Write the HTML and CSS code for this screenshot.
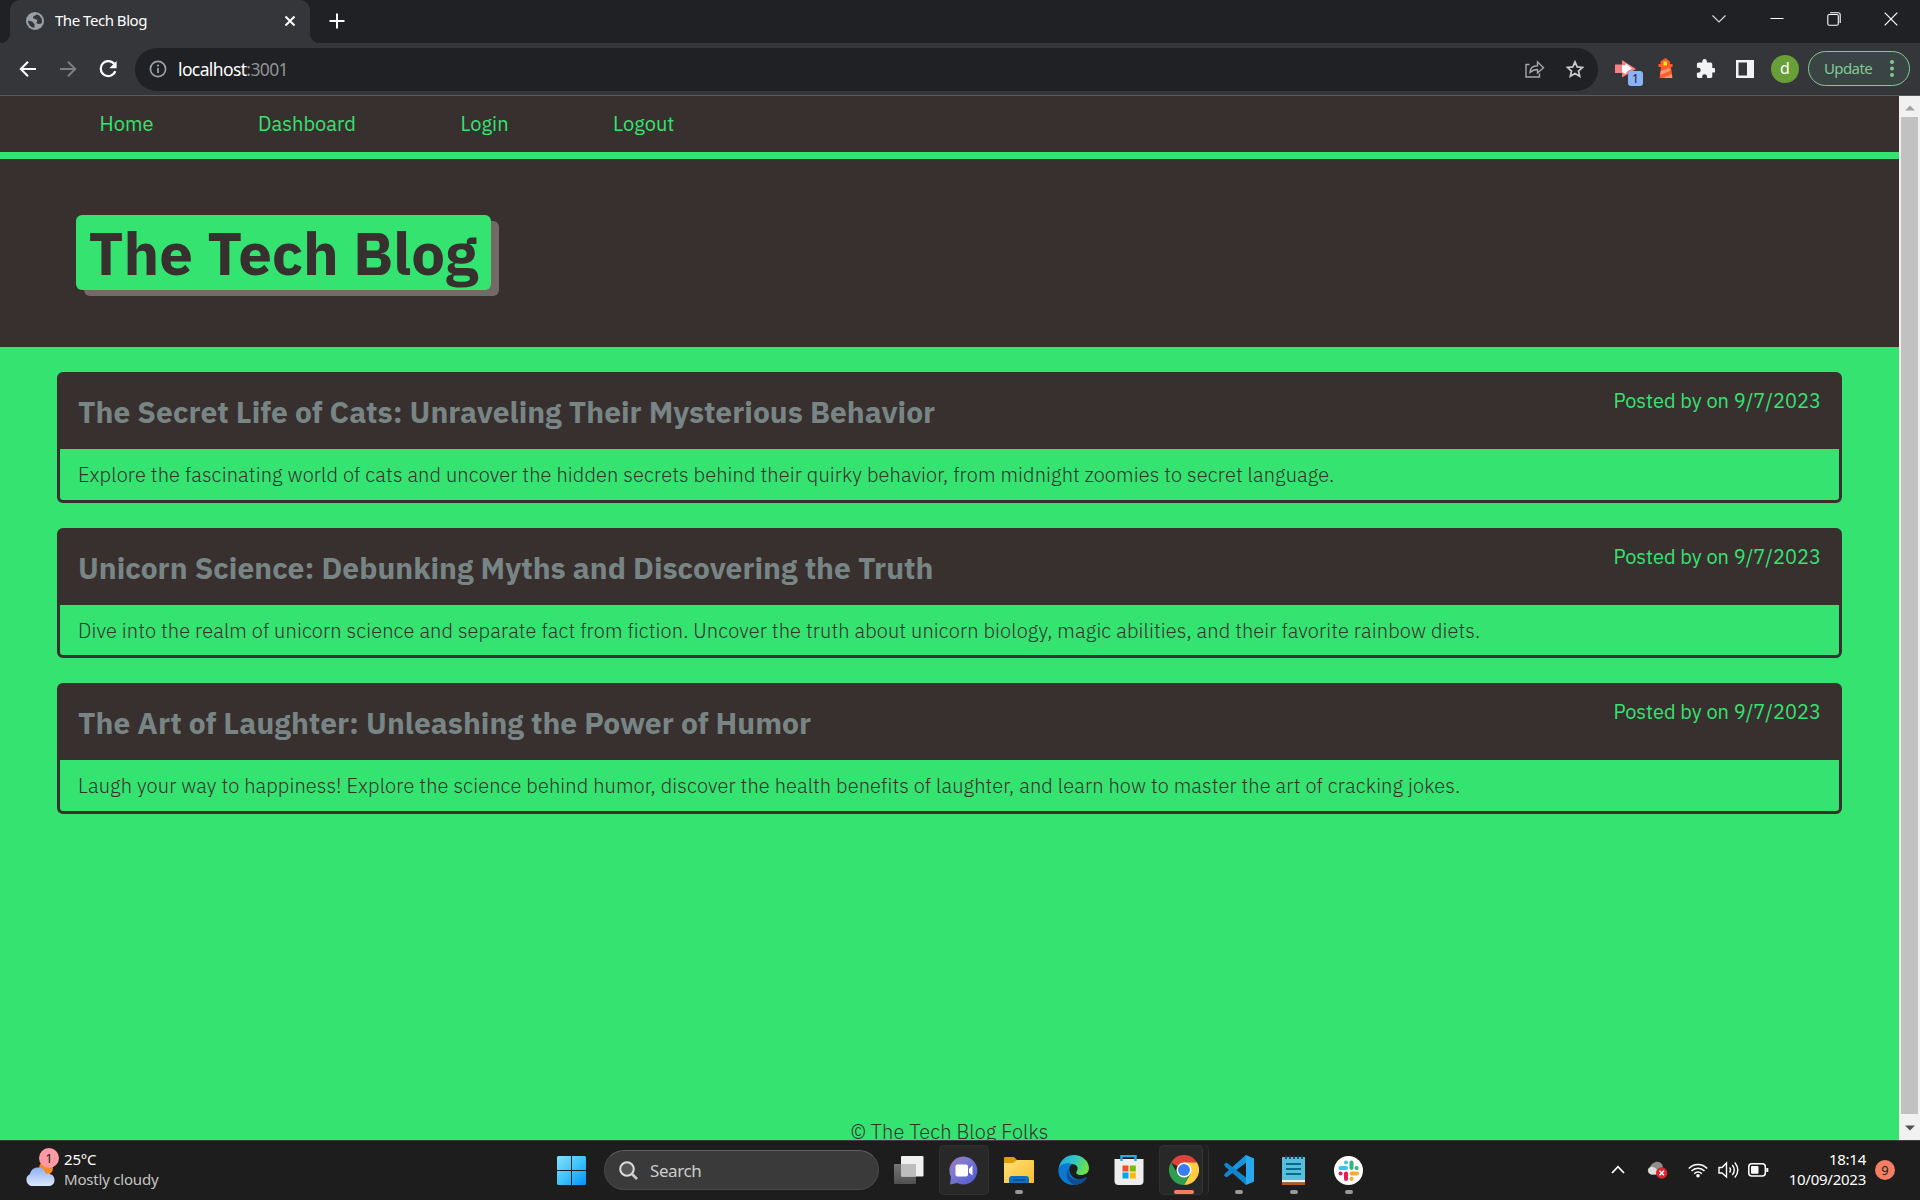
FILE: index.html
```html
<!DOCTYPE html>
<html lang="en">
<head>
<meta charset="utf-8">
<title>The Tech Blog</title>
<link rel="stylesheet" href="styles.css">
</head>
<body>
<div class="screen">
  <div class="tabstrip">
    <div class="tab">
      <svg class="globe" width="18" height="18" viewBox="0 0 18 18"><circle cx="9" cy="9" r="9" fill="#9aa0a6"/><path d="M2 8.500 6 9.500 8.500 12V15.800A7 7 0 0 1 2 8.500zM10.500 2.200C10 4 7 3.500 7 5.500 7 7.500 10 6.500 11 8 12 9.500 9.500 10 11 11.500 12.500 12.500 14 11.500 15.500 11.500A7 7 0 0 0 10.500 2.200z" fill="#35363a"/></svg>
      <span class="tab-title">The Tech Blog</span>
      <svg width="12" height="12" viewBox="0 0 12 12"><path d="M1.500 1.500l9 9M10.500 1.500l-9 9" stroke="#fff" stroke-width="2"/></svg>
    </div>
    <svg class="newtab" width="16" height="16" viewBox="0 0 16 16"><path d="M8 .5v15M.5 8h15" stroke="#fff" stroke-width="2"/></svg>
    <div class="window-buttons">
      <svg width="16" height="14" viewBox="0 0 16 14"><path d="M1.500 3.500 8 10l6.500-6.500" fill="none" stroke="#ddd" stroke-width="1.100"/></svg>
      <svg width="14" height="14" viewBox="0 0 14 14"><path d="M.5 6.500h13" stroke="#fff"/></svg>
      <svg width="14" height="14" viewBox="0 0 14 14"><rect x=".8" y="2.500" width="10.500" height="10.700" rx="1.500" fill="none" stroke="#fff" stroke-width="1.100"/><path d="M3 .7h8.200a2 2 0 0 1 2 2V11" fill="none" stroke="#fff" stroke-width="1.100"/></svg>
      <svg width="14" height="14" viewBox="0 0 14 14"><path d="M.7.7l12.600 12.600M13.300.7.7 13.300" stroke="#fff" stroke-width="1.200"/></svg>
    </div>
  </div>
  <div class="toolbar">
    <div class="nav-buttons">
      <svg width="18" height="18" viewBox="0 0 18 18"><path d="M17 9H2M9 1.800 1.800 9 9 16.200" fill="none" stroke="#fff" stroke-width="2"/></svg>
      <svg width="18" height="18" viewBox="0 0 18 18"><path d="M1 9h15M9 1.800 16.200 9 9 16.200" fill="none" stroke="#7c7e82" stroke-width="2"/></svg>
      <svg width="18" height="18" viewBox="0 0 18 18"><path d="M15.600 4.500A7.500 7.500 0 1 0 16.300 11.200" fill="none" stroke="#fff" stroke-width="2.200"/><path d="M17.600 1v7.200h-7.200z" fill="#fff"/></svg>
    </div>
    <div class="omnibox">
      <svg width="18" height="18" viewBox="0 0 18 18"><circle cx="9" cy="9" r="7.600" fill="none" stroke="#9aa0a6" stroke-width="1.700"/><path d="M9 8v5" stroke="#9aa0a6" stroke-width="1.800"/><circle cx="9" cy="5.600" r="1.100" fill="#9aa0a6"/></svg>
      <span class="address">localhost<span class="port">:3001</span></span>
      <svg width="20" height="18" viewBox="0 0 20 18"><path d="M4.500 4.500H1V17h13.500v-3.500M5 12.500C5 8 8 5.700 12.500 5.700V1.800L18.500 7.700 12.500 13V9.500C9 9.500 7 10.500 5 12.500z" fill="none" stroke="#a5a8ab" stroke-width="1.400"/></svg>
      <svg class="star" width="18" height="18" viewBox="0 0 18 18"><path d="M9 1.800l2.200 5.100 5.400.5-4.100 3.600 1.200 5.300L9 13.500l-4.700 2.800 1.200-5.300L1.400 7.400l5.400-.5z" fill="none" stroke="#c9cbcd" stroke-width="1.700"/></svg>
    </div>
    <div class="extensions">
      <div class="ext">
        <svg width="22" height="18" viewBox="0 0 22 18"><path d="M0 4.500h7V0l14 9L7 17.500V13H0z" fill="#f98080"/><path d="M7 5l3 .5 1-2 6 5-5 3-1.500 2.500L7 12z" fill="#fff"/></svg>
        <span class="ext-badge">1</span>
      </div>
      <svg class="lighthouse" width="16" height="21" viewBox="0 0 16 21"><path d="M7.500 0 12 3.500V6h2.500v3H13l1.500 11h-13L3 9H.5V6h2V3.500z" fill="#ff5c2b"/><rect x="5.500" y="3.500" width="3.500" height="4" fill="#ffe500"/><path d="M3 13l8.500-3 .5 3-9.700 4z" fill="#ff9a78"/><path d="M5 20l8.500-4 .7 4z" fill="#ff9a78"/></svg>
      <svg class="puzzle" width="19" height="19" viewBox="1 1 21 21"><path d="M20.500 11H19V7c0-1.100-.9-2-2-2h-4V3.500a2.500 2.500 0 0 0-5 0V5H4c-1.100 0-2 .9-2 2v3.800h1.500a2.700 2.700 0 0 1 0 5.400H2V20c0 1.100.9 2 2 2h3.800v-1.500a2.700 2.700 0 0 1 5.400 0V22H17c1.100 0 2-.9 2-2v-4h1.500a2.500 2.500 0 0 0 0-5z" fill="#f1f3f4"/></svg>
      <svg class="panel" width="18" height="18" viewBox="0 0 18 18"><path d="M0 0h18v18H0zM2.500 2.500v13H11v-13z" fill="#f1f3f4" fill-rule="evenodd"/></svg>
      <span class="avatar">d</span>
      <div class="update"><span>Update</span><svg width="4" height="17" viewBox="0 0 4 17"><g fill="#81c995"><circle cx="2" cy="2" r="2"/><circle cx="2" cy="8.500" r="2"/><circle cx="2" cy="15" r="2"/></g></svg></div>
    </div>
  </div>
  <div class="viewport">
    <div class="page">
      <nav class="site-nav"><a>Home</a><a>Dashboard</a><a>Login</a><a>Logout</a></nav>
      <header class="hero"><h1>The Tech Blog</h1></header>
      <main class="posts">
        <article class="post">
          <div class="post-head"><h2>The Secret Life of Cats: Unraveling Their Mysterious Behavior</h2><span class="meta">Posted by on 9/7/2023</span></div>
          <p>Explore the fascinating world of cats and uncover the hidden secrets behind their quirky behavior, from midnight zoomies to secret language.</p>
        </article>
        <article class="post">
          <div class="post-head"><h2>Unicorn Science: Debunking Myths and Discovering the Truth</h2><span class="meta">Posted by on 9/7/2023</span></div>
          <p>Dive into the realm of unicorn science and separate fact from fiction. Uncover the truth about unicorn biology, magic abilities, and their favorite rainbow diets.</p>
        </article>
        <article class="post">
          <div class="post-head"><h2>The Art of Laughter: Unleashing the Power of Humor</h2><span class="meta">Posted by on 9/7/2023</span></div>
          <p>Laugh your way to happiness! Explore the science behind humor, discover the health benefits of laughter, and learn how to master the art of cracking jokes.</p>
        </article>
      </main>
      <footer>© The Tech Blog Folks</footer>
    </div>
    <div class="scrollbar">
      <svg width="10" height="6" viewBox="0 0 10 6"><path d="M0 5.500h10L5 .5z" fill="#a3a3a3"/></svg>
      <div class="thumb"></div>
      <svg width="10" height="6" viewBox="0 0 10 6"><path d="M0 .5h10l-5 5z" fill="#505050"/></svg>
    </div>
  </div>
  <div class="taskbar">
    <div class="weather">
      <div class="weather-icon">
        <svg width="32" height="38" viewBox="0 0 32 38"><defs><linearGradient id="cl" x1="0" y1="0" x2="0" y2="1"><stop offset="0" stop-color="#8db1f2"/><stop offset="1" stop-color="#dce8fc"/></linearGradient></defs><circle cx="22" cy="17" r="7" fill="#f58a1f"/><path d="M7 35a6.500 6.500 0 0 1-1-12C7 18 11 16 14.500 16.500c4 .3 6 2.500 7.500 6.500 4-1 8.500 1 8.500 6 0 4-2.500 6-6.500 6z" fill="url(#cl)"/></svg>
        <span class="weather-badge">1</span>
      </div>
      <div class="weather-text"><span>25°C</span><span class="dim">Mostly cloudy</span></div>
    </div>
    <div class="apps">
      <svg class="start" width="29" height="29" viewBox="0 0 29 29"><defs><linearGradient id="win" gradientUnits="userSpaceOnUse" x1="0" y1="0" x2="29" y2="29"><stop offset="0" stop-color="#86e0ff"/><stop offset=".5" stop-color="#3fc4fb"/><stop offset="1" stop-color="#0590f8"/></linearGradient></defs><path d="M1 0h13v14H0V1zM15 0h13l1 1v13H15zM0 15h14v14H1l-1-1zM15 15h14v13l-1 1H15z" fill="url(#win)"/></svg>
      <div class="search"><svg width="19" height="19" viewBox="0 0 19 19"><circle cx="8" cy="8" r="6.800" fill="#555" stroke="#ddd" stroke-width="2"/><path d="M13 13l5 5" stroke="#ccc" stroke-width="2.600"/></svg><span>Search</span></div>
      <div class="app"><svg width="30" height="28" viewBox="0 0 30 28"><defs><linearGradient id="tv" x1="0" y1="0" x2="0" y2="1"><stop offset="0" stop-color="#757575"/><stop offset="1" stop-color="#505050"/></linearGradient></defs><rect y="8" width="22" height="20" rx="1" fill="url(#tv)"/><rect x="7" y="0" width="22.500" height="20.500" rx="1" fill="#f0f0f0"/><path d="M7 8h15v12.500H7z" fill="#bdbdbd"/></svg></div>
      <div class="app tile"><svg width="29" height="29" viewBox="0 0 29 29"><defs><linearGradient id="ch" x1="0" y1="0" x2="1" y2="1"><stop offset="0" stop-color="#9c72b0"/><stop offset=".35" stop-color="#7f7bd2"/><stop offset="1" stop-color="#4a55d0"/></linearGradient></defs><path d="M14.500.5a14 14 0 1 1-6.500 26.500L1 28.500 2 21A14 14 0 0 1 14.500.5z" fill="url(#ch)"/><rect x="6.500" y="8.500" width="12.500" height="12" rx="2" fill="#fff"/><path d="M20 13l3.500-3.500v10L20 16.500z" fill="#fff"/></svg></div>
      <div class="app run"><svg width="30" height="27" viewBox="0 0 30 27"><defs><linearGradient id="fo" x1="0" y1="0" x2="1" y2="1"><stop offset="0" stop-color="#ffe07a"/><stop offset="1" stop-color="#fabd2d"/></linearGradient></defs><path d="M0 1Q0 0 1 0h9l3 3v6H0z" fill="#dd9e06"/><path d="M0 6h9l4-3h16q1 0 1 1v22H0z" fill="url(#fo)"/><path d="M5 26v-4q0-3 3-3h14q3 0 3 3v4z" fill="#0f6fc4"/><path d="M9 23h12" stroke="#064b87" stroke-width="1.500"/></svg></div>
      <div class="app"><svg width="31" height="30" viewBox="0 0 31 30"><defs><linearGradient id="ed" x1="0" y1="0" x2="1" y2=".3"><stop offset="0" stop-color="#1ba5df"/><stop offset=".55" stop-color="#30c6c8"/><stop offset="1" stop-color="#6be04b"/></linearGradient></defs><path d="M.5 14C2 5 8 0 16 0c8 0 15 6 15 13 0 5-4 7-8 7-4 0-6-2-4-4 2-4-1-7-5-7C7 9 2 11 .5 14z" fill="url(#ed)"/><path d="M.5 14C2 9 9 7 14 9c-4 3-4 10 2 14 4 2 9 2 12 0-3 5-8 7-12 7C6 30-.5 22 .5 14z" fill="#0b78d1"/><path d="M11 13c-3 8 5 16 17 9l1 1C25 29 20 30 16 30 8 26 7 18 11 13z" fill="#0d4e94"/></svg></div>
      <div class="app"><svg width="30" height="30" viewBox="0 0 30 30"><path d="M.5 4h29v22q0 4-4 4h-21q-4 0-4-4z" fill="#eee"/><path d="M7.500 6V1h14v5" fill="none" stroke="#25a8ea" stroke-width="2.500"/><path d="M8.500 10.500h6v6h-6z" fill="#f25022"/><path d="M15.800 10.500h6v6h-6z" fill="#7fba00"/><path d="M8.500 17.500h6v6h-6z" fill="#00a4ef"/><path d="M15.800 17.500h6v6h-6z" fill="#ffb900"/></svg></div>
      <div class="app tile stacked active"><svg width="30" height="30" viewBox="0 0 30 30"><path d="M15 15 2 7.500A15 15 0 0 1 28 7.500z" fill="#db4437"/><path d="M28 7.500A15 15 0 0 1 15 30l6.500-11.300L15 7.500z" fill="#ffcd40"/><path d="M2 7.500A15 15 0 0 0 15 30l6.500-11.300h-13z" fill="#2f9e4f"/><circle cx="15" cy="15" r="7.500" fill="#fff"/><circle cx="15" cy="15" r="6" fill="#3a7df0"/></svg></div>
      <div class="app run"><svg width="30" height="30" viewBox="0 0 30 30"><path d="M22 0 30 3.500v23L22 30z" fill="#28a8ee"/><path d="M0 9.500 2.500 7.500 22 22.500V30L1 11.500z" fill="#1286cc"/><path d="M0 20.500 2.500 22.500 22 7.500V0L1 18.500z" fill="#1286cc"/><path d="M22 0v7.500L12 15 8.500 12z" fill="#1795dd"/></svg></div>
      <div class="app run"><svg width="23" height="30" viewBox="0 0 23 30"><path d="M0 2h23v23H0z" fill="#57bfdc"/><path d="M4 0v4M8 0v4M12 0v4M16 0v4M20 0v4" stroke="#123f50" stroke-width="1.600"/><path d="M4 9h15M4 14h15M4 19h15" stroke="#056c8c" stroke-width="2"/><path d="M0 25h23v2.500H0z" fill="#eee"/><path d="M0 27.500h23V30H0z" fill="#b35a14"/></svg></div>
      <div class="app run"><svg width="29" height="29" viewBox="0 0 29 29"><circle cx="14.500" cy="14.500" r="14.500" fill="#fff"/><g stroke-width="4" stroke-linecap="round"><path d="M6.500 12h5.500M12 6.500v.1" stroke="#36c5f0"/><path d="M17.500 6.500V12M22.500 12h.1" stroke="#2eb67d"/><path d="M17.500 17.500h5.500M17.500 22.800v.1" stroke="#ecb22e"/><path d="M12 17.500v5.500M6.500 17.500h.1" stroke="#e01e5a"/></g></svg></div>
    </div>
    <div class="tray">
      <svg width="14" height="9" viewBox="0 0 14 9"><path d="M1 8l6-6.300L13 8" fill="none" stroke="#fff" stroke-width="1.800"/></svg>
      <svg class="cloud" width="21" height="18" viewBox="0 0 21 18"><path d="M4 13.500a4 4 0 0 1-1-7.500C5 1 12-2 15.500 4l1 9.500z" fill="#8e8e8e"/><path d="M4 13.500a4 4 0 0 1-.5-7.500C7 5 10 8 14 13.500z" fill="#dedede"/><circle cx="14.700" cy="12" r="5.700" fill="#dc2430"/><path d="M12.500 9.800l4.500 4.500M17 9.800l-4.500 4.500" stroke="#fff" stroke-width="1.500"/></svg>
      <svg class="wifi" width="20" height="16" viewBox="0 0 20 16"><g fill="none" stroke="#fff" stroke-width="1.500"><path d="M.8 6.500a12.500 12.500 0 0 1 18.400 0"/><path d="M3.500 9a9 9 0 0 1 13 0"/><path d="M6.200 11.700a5.300 5.300 0 0 1 7.600 0"/></g><circle cx="10" cy="13.800" r="1.800" fill="#fff"/></svg>
      <svg class="sound" width="21" height="18" viewBox="0 0 21 18"><path d="M1 6.500h3L8.500 2v14L4 12H1zM11.500 6.500q2 2.500 0 5M14.300 4q4 5 0 10M16.800 1.500q6 7.500 0 15" fill="none" stroke="#fff" stroke-width="1.400"/></svg>
      <svg class="battery" width="21" height="14" viewBox="0 0 21 14"><rect x=".8" y=".8" width="16.500" height="12.200" rx="3" fill="none" stroke="#fff" stroke-width="1.500"/><rect x="3" y="3" width="7.500" height="7.800" rx="1" fill="#fff"/><path d="M19.300 5v4" stroke="#fff" stroke-width="2"/></svg>
      <div class="clock"><span>18:14</span><span>10/09/2023</span></div>
      <span class="notice">9</span>
    </div>
  </div>
</div>
</body>
</html>
```
FILE: styles.css
```css
* { box-sizing: border-box; }
body { margin: 0; }
svg { display: block; flex: none; }

.screen {
  width: 1920px;
  height: 1200px;
  display: flex;
  flex-direction: column;
  overflow: hidden;
  font-family: "Noto Sans", sans-serif;
  color: #fff;
}

/* Browser tabs */
.tabstrip { height: 43px; flex: none; background: #202124; display: flex; align-items: flex-start; padding-left: 10px; }
.tab { width: 300px; height: 43px; background: #35363a; border-radius: 10px 10px 0 0; display: flex; align-items: center; padding: 0 14px 1px 16px; position: relative; }
.tab::before, .tab::after { content: ""; position: absolute; bottom: 0; width: 10px; height: 10px; }
.tab::before { left: -10px; background: radial-gradient(circle at 0 0, #202124 10px, #35363a 10.5px); }
.tab::after { right: -10px; background: radial-gradient(circle at 100% 0, #202124 10px, #35363a 10.5px); }
.tab-title { flex: 1; margin-left: 11px; font-size: 15px; line-height: 20px; letter-spacing: -0.47px; padding-bottom: 2px; }
.newtab { margin: 13px 0 0 19px; }
.window-buttons { margin-left: auto; display: flex; align-items: center; gap: 43px; padding: 12px 22px 0 0; }

/* Address row */
.toolbar { height: 53px; flex: none; background: #35363a; border-bottom: 1px solid #5a5b5f; display: flex; align-items: center; }
.nav-buttons { display: flex; gap: 22px; margin-left: 19px; }
.omnibox { width: 1463px; height: 43px; margin-left: 18px; border-radius: 22px; background: #202124; display: flex; align-items: center; padding: 0 14px 0 14px; }
.address { flex: 1; margin-left: 11px; font-size: 17.5px; letter-spacing: -0.62px; }
.port { color: #8f9296; }
.star { margin-left: 21px; }
.extensions { display: flex; align-items: center; margin-left: 17px; padding-bottom: 1px; }
.ext { position: relative; width: 22px; }
.ext-badge { position: absolute; left: 13px; top: 11px; width: 15px; height: 15px; border-radius: 3px; background: #8ab4f8; color: #202124; font-size: 12px; line-height: 15px; text-align: center; }
.lighthouse { margin-left: 21px; }
.puzzle { margin-left: 22px; }
.panel { margin-left: 21px; }
.avatar { width: 28px; height: 28px; margin-left: 17px; border-radius: 50%; background: #689f38; font-size: 16px; line-height: 27px; text-align: center; }
.update { width: 102px; height: 35px; margin-left: 9px; border: 1.5px solid #81c995; border-radius: 18px; background: #3b4444; color: #81c995; font-size: 15px; letter-spacing: -0.6px; display: flex; align-items: center; justify-content: space-between; padding: 0 15px 1px 15px; }

/* Web page */
.viewport { height: 1044px; flex: none; display: flex; }
.page { width: 1899px; background: #35e370; color: #382f2f; font-family: "IBM Plex Sans", "Open Sans", sans-serif; font-size: 20px; display: flex; flex-direction: column; overflow: hidden; }
.site-nav { height: 63px; flex: none; background: #382f2f; border-bottom: 7px solid #35e370; color: #35e370; display: flex; align-items: center; gap: 104.5px; padding: 0 0 1px 99.6px; letter-spacing: 0.04px; }
.hero { height: 188px; flex: none; background: #382f2f; padding: 56px 76px; }
h1 { width: 415px; height: 75px; margin: 0; border-radius: 6px; background: #35e370; box-shadow: 8px 6px #746967; font-size: 60px; font-weight: 700; line-height: 75px; padding-left: 12.5px; white-space: nowrap; }
.posts { flex: 1; display: flex; flex-direction: column; gap: 25px; padding: 25px 57px 0; }
.post { border: 3px solid #382f2f; border-radius: 6px; height: 130.7px; }
.post-head { height: 74px; background: #382f2f; display: flex; justify-content: space-between; padding: 0 18px; white-space: nowrap; }
h2 { margin: 0; color: #788585; font-size: 30px; font-weight: 700; line-height: 74px; }
.meta { color: #35e370; line-height: 52px; }
.post p { margin: 0; padding-left: 18px; line-height: 51px; font-weight: 300; letter-spacing: 0.133px; white-space: nowrap; }
footer { height: 24px; flex: none; text-align: center; font-weight: 300; line-height: 32px; letter-spacing: 0.1px; }
.scrollbar { width: 21px; background: #f1f1f1; display: flex; flex-direction: column; align-items: center; padding: 9px 0; }
.thumb { width: 17px; flex: 1; margin: 6px 0 11px; background: #c1c1c1; }

/* Desktop taskbar */
.taskbar { height: 60px; background: #1d1d1d; border-top: 1px solid #3d3d3d; display: flex; align-items: center; }
.weather { width: 541px; display: flex; align-items: center; padding: 0 0 2px 24px; }
.weather-icon { position: relative; }
.weather-badge { position: absolute; left: 15px; top: -3px; width: 20px; height: 20px; border-radius: 50%; background: #ff99a4; color: #222; font-size: 13px; line-height: 20px; text-align: center; }
.weather-text { display: flex; flex-direction: column; margin-left: 8px; padding-bottom: 2px; font-size: 15px; line-height: 20px; letter-spacing: -0.2px; }
.dim { color: #c4c4c4; }
.apps { display: flex; align-items: center; padding-bottom: 1px; }
.start { margin-left: 16px; }
.search { width: 275px; height: 40px; margin: 0 5px 0 18px; border-radius: 20px; background: #3a3a3a; border: 1px solid #484848; border-top-color: #606060; display: flex; align-items: center; gap: 12px; padding-left: 14px; font-size: 17px; letter-spacing: -0.4px; color: #ccc; }
.app { width: 50px; height: 50px; margin-right: 4.9px; display: flex; align-items: center; justify-content: center; position: relative; border-radius: 5px; }
.tile { background: #282828; box-shadow: inset 0 0 0 1px #303030; }
.run::after, .active::after { content: ""; position: absolute; left: 21px; bottom: 1px; width: 8px; height: 4px; border-radius: 2px; background: #999; }
.active::after { left: 15px; width: 20px; background: #f47e62; }
.stacked { margin-left: 1px; margin-right: 4.4px; box-shadow: inset -5px 0 #1f1f1f, inset -6px 0 #343434, inset 0 0 0 1px #303030; border-right: 1px solid #303030; }
.tray { margin-left: auto; display: flex; align-items: center; padding: 0 25px 2px 0; }
.cloud { margin-left: 22px; }
.wifi { margin-left: 20px; }
.sound { margin-left: 10px; }
.battery { margin-left: 9px; }
.clock { width: 79px; margin-left: 18px; display: flex; flex-direction: column; align-items: flex-end; padding-bottom: 2px; font-size: 15px; line-height: 20px; letter-spacing: -0.25px; }
.notice { width: 20px; height: 20px; margin-left: 9px; border-radius: 50%; background: #f47e62; color: #222; font-size: 13px; line-height: 20px; text-align: center; }
```
